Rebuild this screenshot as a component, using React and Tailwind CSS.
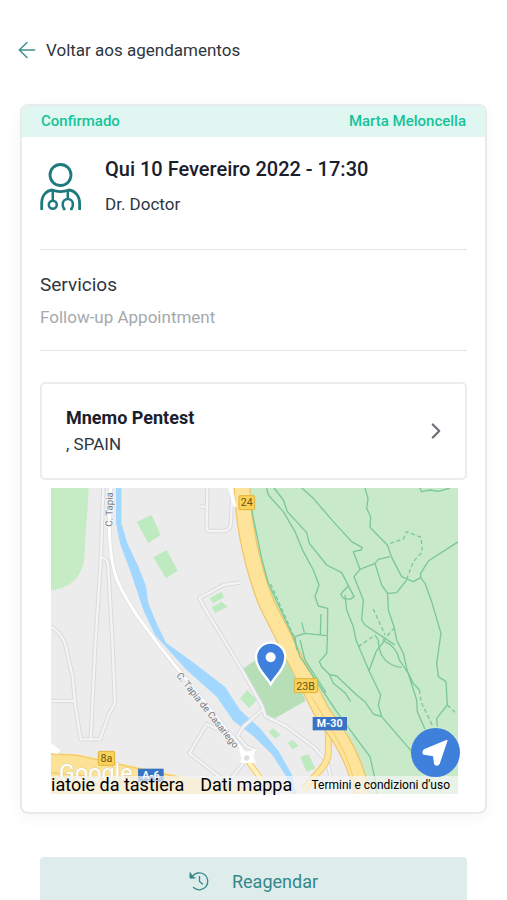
import { ArrowLeft, ChevronRight } from "lucide-react"

const appointment = {
  status: "Confirmado",
  patient: "Marta Meloncella",
  date: "Qui 10 Fevereiro 2022 - 17:30",
  doctor: "Dr. Doctor",
  service: "Follow-up Appointment",
  place: "Mnemo Pentest",
  address: ", SPAIN",
}

// side streets, drawn twice: grey casing first, then the white surface
const streets = [
  "M190 24 L182 250 L165 510 L152 778",
  "M182 236 Q196 228 204 250 L217 480 L225 670 L208 700 L180 778 L122 778 L105 670 L98 590 L75 490 Q60 455 33 440",
  "M33 663 H105",
  "M502 24 L500 145 Q500 153 508 153 L555 153 Q572 150 573 125 L577 24 M480 80 H500",
  "M600 308 L550 315 L478 355 L500 395 L570 510 L600 560 L665 675 L676 708 L740 740 L820 800 L862 845 L872 890",
  "M672 685 L610 740 L592 768 L620 800 L650 812",
  "M530 747 L500 732 L448 820 L500 860 L545 895 M610 850 L570 900",
]

const parkPathsTop = [
  "M50 24 L55 45 L100 95 L135 155 L160 215 L190 270 L207 315 L195 350 L205 378 L233 385 L232 480",
  "M72 24 L100 60 L112 95 L170 158 L178 190 L230 255 L275 278 L312 350 L300 358 L280 355 L272 342 L295 318",
  "M155 24 L190 55 L250 125 L305 185 L337 203 L333 210 L310 215 L330 268 L312 290 L340 360 L335 420 L345 435 L405 475 L435 495",
  "M345 24 L354 55 L350 85 L362 110 L360 142 L412 195 L425 232 L455 290 L490 305 L512 293 L512 280 L535 243 L625 185",
  "M330 268 L375 250 L385 238 L420 230",
  "M375 250 L395 315 L413 340 L440 338 L470 300",
  "M413 340 L415 390 L432 440 L440 480",
  "M512 293 L525 310 L545 365 L573 460 L570 480",
  "M285 345 L290 390 L310 440 L318 480",
  "M140 510 L135 470 L165 460 L230 467 M163 458 L155 428 M211 465 L213 402",
  "M375 465 L385 480",
  "M510 24 L515 35 L540 30 L565 34 L600 24",
  "M5 90 L35 235 L55 310 L130 470",
]

const parkPathsBottom = [
  "M232 0 L230 40 L208 65 L215 80 L238 103 L260 108 L320 165 L345 185 L370 222 L395 230 L490 340",
  "M238 103 L250 130 L285 158 L302 185",
  "M318 0 L357 92 L392 165 L385 195 L395 230",
  "M357 92 L378 35 L405 0",
  "M385 0 Q385 25 395 45 Q415 80 455 82",
  "M405 5 Q440 20 448 60 L475 100 L490 130 L508 150",
  "M440 0 L460 40 L470 85 L500 180 L502 215 L525 268",
  "M570 0 L560 70 L565 110 L588 125 L592 195 L560 235 L562 260",
  "M130 -10 L150 50 L190 110 L260 215 L330 310 L360 350 L378 430 L380 462",
  "M150 0 L165 60 L228 158",
]

const trails = [
  "M1100 298 L1120 245 L1147 215 L1143 172 L1100 155 L1090 177 L1042 193",
  "M1000 387 L1035 465",
  "M955 500 L1005 465",
  "M1028 482 L1062 445",
  "M692 312 L762 470",
  "M1138 630 L1145 670 L1180 742",
  "M1222 675 L1248 700",
]

const highway =
  "M605 10 L612 100 C622 190 650 300 682 375 L740 490 L795 595 L842 690 L900 775 C935 830 955 880 968 950"

function DoctorIcon() {
  return (
    <svg viewBox="0 0 42 48" className="h-12 w-[42px] shrink-0" fill="none" stroke="#1f7a7e" strokeWidth="2.800" aria-hidden="true">
      <circle cx="20.500" cy="12" r="10.500" />
      <path d="M1.700 47 V40 C1.700 32 7 27.500 12 27 C17 28.800 24 28.800 29 27 C34 27.500 39.600 32 39.600 40 V47" />
      <path d="M12.800 27.500 V37 M27.800 27.500 V36" strokeWidth="2.500" />
      <circle cx="12.800" cy="41.800" r="4" strokeWidth="2.500" />
      <path d="M25.500 46 H24 L22.800 43 V41 A5 5 0 0 1 32.800 41 V43 L31.600 46 H30" strokeWidth="2.500" />
    </svg>
  )
}

function HistoryIcon() {
  return (
    <svg viewBox="0 0 20 20" className="size-5" fill="none" stroke="currentColor" strokeWidth="1.300" strokeLinecap="round" strokeLinejoin="round" aria-hidden="true">
      <path d="M3 6 A8.500 8.500 0 1 1 4.500 16.500" />
      <path d="M1.200 2 V6.800 H6" />
      <path d="M1.500 3 L4.500 6.500 H1.500 Z" fill="currentColor" />
      <path d="M10.500 5.500 V10.500 L13.500 13" />
    </svg>
  )
}

function MapDrawing() {
  return (
    <svg viewBox="33 24 1221 918" className="block w-full" role="img" aria-label="Mapa" fontFamily="Roboto, sans-serif">
      <rect x="33" y="24" width="1221" height="918" fill="#edecec" />

      {/* parks */}
      <path d="M33 24 H146 C144 90 137 150 133 235 C126 290 90 328 33 330 Z" fill="#c5ecc5" />
      <path d="M605 24 L612 100 L682 375 L795 595 L900 775 L968 942 H1254 V24 Z" fill="#c8eaca" />
      <path d="M608 567 L660 530 L740 530 L797 662 L705 715 L676 706 Z" fill="#b7dfb7" />
      <g fill="#beeac0">
        <path d="M290 125 L335 105 L362 165 L325 190 Z" />
        <path d="M340 232 L380 210 L413 272 L378 295 Z" />
        <path d="M508 355 L545 335 L552 352 L520 370 Z" />
        <path d="M515 382 L545 365 L563 380 L525 400 Z" />
        <path d="M600 655 L622 630 L650 660 L628 685 Z" />
        <path d="M685 755 L700 745 L721 765 L706 776 Z" />
        <path d="M742 788 L758 780 L776 798 L758 808 Z" />
        <path d="M780 830 L806 823 L826 865 L800 876 Z" />
      </g>

      {/* river */}
      <path
        d="M228 24 V130 L240 190 L275 285 L310 390 L345 465 L440 570 L530 650 L580 722 L640 768 L695 822 L738 888 L755 942 H768 L758 888 L715 812 L660 745 L600 690 L555 620 L450 540 L378 488 L350 430 L325 370 L318 318 L296 262 L262 190 L244 130 V24 Z"
        fill="#a2d8ff"
      />

      {/* A-6 */}
      <path d="M33 820 L110 822 L250 852 L420 888 L660 930 V942 H33 Z" fill="#fce294" />
      <path d="M33 822 L110 826 L250 856 L420 892" fill="none" stroke="#f3cb6c" strokeWidth="4" />
      <path d="M33 878 L160 890 L330 925" fill="none" stroke="#f3cb6c" strokeWidth="4" />
      <path d="M33 788 L62 812 L50 822 L33 818 Z" fill="#fff" />

      <g fill="none" strokeLinejoin="round">
        {streets.map((d) => (
          <path key={d} d={d} stroke="#d9dbde" strokeWidth="13" />
        ))}
        {streets.map((d) => (
          <path key={d} d={d} stroke="#f4f4f5" strokeWidth="7" />
        ))}
        <path d="M212 24 L208 150 C212 290 238 320 290 405 L360 500 L600 800 L620 830" stroke="#dcdddf" strokeWidth="13" />
        <path d="M212 24 L208 150 C212 290 238 320 290 405 L360 500 L600 800 L620 830" stroke="#fff" strokeWidth="9" />
        <path d="M625 845 L665 900 L690 942" stroke="#f3cb6c" strokeWidth="18" />
        <path d="M625 845 L665 900 L690 942" stroke="#fff0bd" strokeWidth="12" />
      </g>
      <path d="M596 806 L620 815 L648 808 L640 830 L648 850 L624 848 L600 850 L604 832 Z" fill="#fff" />
      <circle cx="620" cy="834" r="8" fill="#dcdde0" />

      {/* M-30 */}
      <g fill="none" strokeLinejoin="round">
        <path d="M865 730 V815 Q866 840 845 865 L790 930" stroke="#f0c868" strokeWidth="21" />
        <path d="M865 730 V815 Q866 840 845 865 L790 930" stroke="#fde59c" strokeWidth="15" />
        <path d={highway} stroke="#efc566" strokeWidth="50" />
        <path d={highway} stroke="#fde49a" strokeWidth="43" />
        <path d="M815 650 L880 758 C920 825 938 870 948 942" stroke="#f3cb6c" strokeWidth="3" />
      </g>
      <path d="M565 24 H578 L590 80 H580 Z" fill="#fff" />

      {/* footpaths */}
      <g fill="none" stroke="#7cc799" strokeWidth="4" strokeLinejoin="round">
        <g transform="translate(630 0)">
          {parkPathsTop.map((d) => (
            <path key={d} d={d} />
          ))}
        </g>
        <g transform="translate(630 480)">
          {parkPathsBottom.map((d) => (
            <path key={d} d={d} />
          ))}
        </g>
        {trails.map((d) => (
          <path key={d} d={d} strokeDasharray="12 8" />
        ))}
      </g>

      {/* street names */}
      <g fill="#77797c" stroke="#f4f4f4" strokeWidth="6" paintOrder="stroke" fontSize="29">
        <text transform="translate(217 140) rotate(-89)">C. Tapia</text>
        <text transform="translate(408 587) rotate(51.500)">C. Tapia de Casariego</text>
      </g>

      {/* road shields */}
      <g textAnchor="middle" fontSize="32">
        <g fill="#fad25a" stroke="#e0b23c" strokeWidth="3">
          <rect x="597" y="47" width="47" height="42" rx="3" />
          <rect x="175" y="814" width="49" height="42" rx="3" />
          <rect x="763" y="596" width="70" height="42" rx="3" />
        </g>
        <g fill="#6b5417">
          <text x="620" y="79">24</text>
          <text x="199" y="846">8a</text>
          <text x="797" y="629">23B</text>
        </g>
        <rect x="294" y="866" width="77" height="40" fill="#3873c5" />
        <rect x="818" y="711" width="103" height="40" fill="#3873c5" />
        <g fill="#fff" fontWeight="700">
          <text x="333" y="898">A-6</text>
          <text x="869" y="742">M-30</text>
        </g>
      </g>

      <text x="57" y="902" fontSize="70" fill="#fff" stroke="#d9cfae" strokeWidth="3" paintOrder="stroke">
        Google
      </text>

      {/* clinic pin */}
      <path
        d="M692 613 C680 590 648 565 648 532 A44 44 0 0 1 736 532 C736 565 704 590 692 613 Z"
        fill="#3f80dc"
        stroke="#fff"
        strokeWidth="7"
      />
      <circle cx="692" cy="532" r="15" fill="#fff" />
    </svg>
  )
}

function ClinicMap() {
  return (
    <div className="relative mt-2 mr-[9px] ml-[11px]">
      <MapDrawing />
      <div className="absolute inset-x-0 bottom-0 flex h-[18px] items-center bg-[#f5f5f5]/70 whitespace-nowrap text-black">
        <button type="button" className="text-[18px] leading-6">iatoie da tastiera</button>
        <button type="button" className="ml-4 text-[18px] leading-6">Dati mappa</button>
        <a href="#termini" className="mr-2 ml-auto text-[12px] leading-6">Termini e condizioni d'uso</a>
      </div>
      <button
        type="button"
        aria-label="Direções"
        className="absolute -right-0.5 bottom-[17px] size-[49px] rounded-full bg-[#3f80dc]"
      >
        <svg viewBox="0 0 147 147" className="size-full" aria-hidden="true">
          <path d="M107 38 L84 106 Q80 114 72 108 L68 82 L39 78 Q34 72 40 66 Z" fill="#fff" stroke="#fff" strokeWidth="5" strokeLinejoin="round" />
        </svg>
      </button>
    </div>
  )
}

export default function App() {
  return (
    <div className="min-h-screen bg-white font-['Roboto',sans-serif] text-[#2f3640]">
      <header className="px-[14px] pt-9">
        <a href="#agendamentos" className="flex items-center gap-[6px] text-[17px] leading-7">
          <ArrowLeft className="size-[26px] text-[#3c908f]" strokeWidth={1.3} />
          Voltar aos agendamentos
        </a>
      </header>

      <main>
        <section className="mx-5 mt-10 rounded-lg border-2 border-[#e9ebeb] shadow-[0_4px_16px_rgba(0,0,0,0.04)]">
          <div className="flex h-[31px] items-center justify-between rounded-t-md bg-[#e0f6f1] px-[19px] text-[15px] font-medium text-[#15c39a]">
            <span>{appointment.status}</span>
            <span>{appointment.patient}</span>
          </div>

          <div className="px-[18px] pb-[18px]">
            <div className="flex gap-[23px] border-b border-[#e3e5e6] pt-5 pb-[33px]">
              <div className="pt-[6px]">
                <DoctorIcon />
              </div>
              <div>
                <h1 className="text-[20px] leading-6 font-medium text-[#1a202b]">{appointment.date}</h1>
                <p className="mt-[11px] text-[17px] leading-6">{appointment.doctor}</p>
              </div>
            </div>

            <div className="border-b border-[#e3e5e6] pt-[21px] pb-[21px]">
              <h2 className="text-[19px] leading-7">Servicios</h2>
              <p className="mt-[6px] text-[17px] leading-6 text-[#a5a9ad]">{appointment.service}</p>
            </div>

            <a href="#clinica" className="mt-[31px] flex items-center justify-between rounded-[5px] border-2 border-[#ebeced] py-[21px] pr-4 pl-6">
              <span className="block">
                <strong className="block text-[18px] leading-[26px] font-bold text-[#1a202b]">{appointment.place}</strong>
                <span className="block text-[17px] leading-[26px]">{appointment.address}</span>
              </span>
              <ChevronRight className="size-[26px] text-[#6a7077]" strokeWidth={2} />
            </a>

            <ClinicMap />
          </div>
        </section>

        <div className="mx-10 mt-[43px]">
          <button type="button" className="flex h-12 w-full items-center justify-center gap-[23px] rounded bg-[#deeceb] text-[18px] text-[#33888a]">
            <HistoryIcon />
            Reagendar
          </button>
        </div>
      </main>
    </div>
  )
}
